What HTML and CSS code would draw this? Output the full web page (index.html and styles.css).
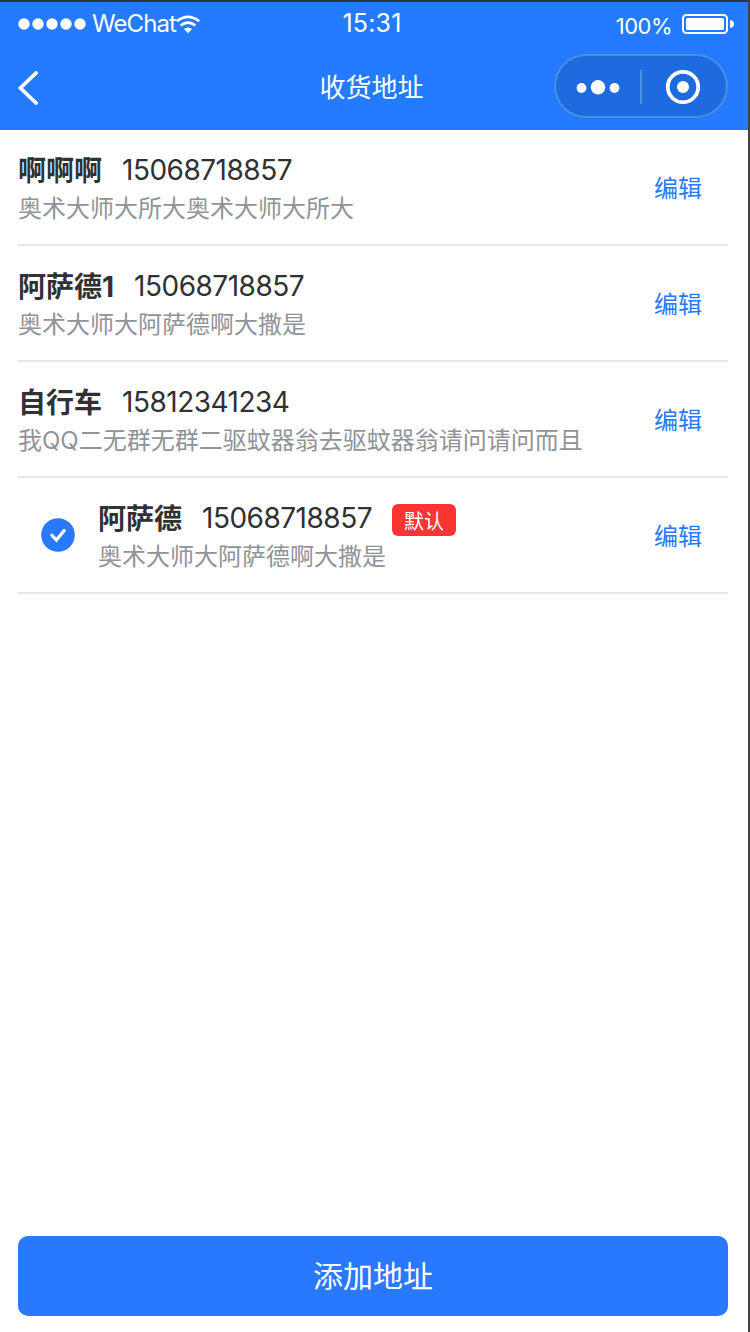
FILE: index.html
```html
<!DOCTYPE html>
<html lang="zh-CN">
<head>
    <meta charset="UTF-8">
    <meta name="viewport" content="width=device-width, initial-scale=1.0">
    <title>收货地址</title>
    <link rel="stylesheet" href="styles.css">
</head>
<body>
    <header class="header">
        <div class="status-bar">
            <div class="status-left">
                <svg class="signal" width="68" height="12" viewBox="0 0 68 12" fill="#fff">
                    <circle cx="6" cy="6" r="5.7"/>
                    <circle cx="20" cy="6" r="5.7"/>
                    <circle cx="34" cy="6" r="5.7"/>
                    <circle cx="48" cy="6" r="5.7"/>
                    <circle cx="62" cy="6" r="5.7"/>
                </svg>
                <span class="carrier">WeChat</span>
                <svg class="wifi" width="24" height="19" viewBox="0 0 24 19" fill="none" stroke="#fff" stroke-width="2.6">
                    <path d="M0.8 6.2Q12 -2.4 23.2 6.2"/>
                    <path d="M4.6 10.6Q12 4.6 19.4 10.6"/>
                    <path d="M8 14Q12 10.8 16 14L12 18.2Z" fill="#fff" stroke="none"/>
                </svg>
            </div>
            <div class="status-time">15:31</div>
            <div class="status-right">
                <span class="percent">100%</span>
                <svg class="battery" width="52" height="20" viewBox="0 0 52 20">
                    <rect x="1" y="1" width="44" height="18" rx="3.5" fill="none" stroke="#fff" stroke-width="2"/>
                    <rect x="4" y="4" width="38" height="12" rx="1.5" fill="#fff"/>
                    <path d="M48 6Q52 6.5 52 10T48 14Z" fill="#fff"/>
                </svg>
            </div>
        </div>
        <div class="nav-bar">
            <svg class="back" width="20" height="34" viewBox="0 0 20 34" fill="none" stroke="#fff" stroke-width="3.8" stroke-linecap="round">
                <path d="M18 2L2.4 17L18 32"/>
            </svg>
            <h1 class="title">收货地址</h1>
            <div class="capsule">
                <svg width="174" height="64" viewBox="0 0 174 64" fill="#fff">
                    <circle cx="27.5" cy="34" r="4.9"/>
                    <circle cx="44" cy="33.3" r="7.2"/>
                    <circle cx="60.5" cy="34" r="4.9"/>
                    <rect x="86" y="16" width="2" height="34" fill="#4a90e7"/>
                    <circle cx="129" cy="33" r="15.2" fill="none" stroke="#fff" stroke-width="3.8"/>
                    <circle cx="129" cy="33" r="6"/>
                </svg>
            </div>
        </div>
    </header>

    <main class="list">
        <div class="item">
            <div class="info">
                <div class="line"><span class="name">啊啊啊</span><span class="phone">15068718857</span></div>
                <div class="address">奥术大师大所大奥术大师大所大</div>
            </div>
            <a class="edit">编辑</a>
        </div>
        <div class="item">
            <div class="info">
                <div class="line"><span class="name">阿萨德1</span><span class="phone">15068718857</span></div>
                <div class="address">奥术大师大阿萨德啊大撒是</div>
            </div>
            <a class="edit">编辑</a>
        </div>
        <div class="item">
            <div class="info">
                <div class="line"><span class="name">自行车</span><span class="phone">15812341234</span></div>
                <div class="address">我QQ二无群无群二驱蚊器翁去驱蚊器翁请问请问而且</div>
            </div>
            <a class="edit">编辑</a>
        </div>
        <div class="item">
            <div class="check">
                <svg width="34" height="34" viewBox="0 0 34 34">
                    <circle cx="17" cy="17" r="16.8" fill="#2979ff"/>
                    <path d="M10.8 17.2L15.4 22L23.2 12.4" fill="none" stroke="#fff" stroke-width="3.2" stroke-linecap="round" stroke-linejoin="miter"/>
                </svg>
            </div>
            <div class="info">
                <div class="line"><span class="name">阿萨德</span><span class="phone">15068718857</span><span class="tag">默认</span></div>
                <div class="address">奥术大师大阿萨德啊大撒是</div>
            </div>
            <a class="edit">编辑</a>
        </div>
    </main>

    <footer class="footer">
        <button class="add-btn">添加地址</button>
    </footer>
</body>
</html>
```

FILE: styles.css
```css
* {
    box-sizing: border-box;
}
body {
    display: flex;
    flex-direction: column;
    height: 1332px;
    margin: 0;
    border-top: 2px solid #333436;
    border-right: 2px solid #434345;
    background: #fff;
    color: #303133;
    font-family: Inter, "Noto Sans CJK SC", sans-serif;
}
.header {
    height: 128px;
    background: #247bff;
    color: #fff;
}
.status-bar {
    display: grid;
    grid-template-columns: 1fr auto 1fr;
    height: 44px;
    padding: 0 14px 0 18px;
    font-size: 24px;
    line-height: 42px;
}
.status-left,
.status-right {
    display: flex;
    align-items: center;
    height: 44px;
}
.carrier {
    margin-left: 6px;
    letter-spacing: -0.9px;
}
.status-time {
    padding-right: 8px;
    font-size: 25px;
    letter-spacing: 0.2px;
}
.status-right {
    justify-content: flex-end;
    gap: 10px;
    font-size: 22px;
}
.percent {
    padding-top: 3px;
    letter-spacing: -0.5px;
}
.nav-bar {
    display: grid;
    grid-template-columns: 1fr auto 1fr;
    align-items: center;
    height: 84px;
    padding: 0 20px 0 18px;
}
.title {
    margin: 0;
    padding-right: 3px;
    font-size: 26px;
    font-weight: 400;
    line-height: 80px;
}
.capsule {
    justify-self: end;
    width: 174px;
    height: 64px;
    margin-top: -4px;
    border-radius: 32px;
    background: #1e6bdf;
    box-shadow: inset 0 0 0 2px #4a90e7;
}
.capsule svg {
    display: block;
}
.list {
    flex: 1;
    padding: 0 20px 0 18px;
}
.item {
    display: flex;
    align-items: center;
    height: 116px;
    border-bottom: 2px solid #e4e7ed;
}
.check {
    display: flex;
    justify-content: center;
    width: 80px;
}
.info {
    flex: 1;
}
.line {
    display: flex;
    align-items: center;
    height: 38px;
    font-size: 28px;
}
.name {
    margin-right: 20px;
    font-weight: 700;
}
.phone {
    padding-top: 2px;
    letter-spacing: -0.5px;
}
.tag {
    height: 32px;
    margin: 6px 0 0 20px;
    padding: 1px 12px 0;
    border-radius: 6px;
    background: #fa3534;
    color: #fff;
    font-size: 20px;
    line-height: 34px;
}
.address {
    height: 36px;
    color: #909399;
    font-size: 24px;
    line-height: 42px;
}
.edit {
    padding: 0 26px 2px 0;
    color: #2979ff;
    font-size: 24px;
}
.footer {
    padding: 0 20px 16px 18px;
}
.add-btn {
    display: block;
    width: 100%;
    height: 80px;
    padding: 0 6px 4px;
    border: none;
    border-radius: 10px;
    background: #2979ff;
    color: #fff;
    font-family: inherit;
    font-size: 30px;
}
```
